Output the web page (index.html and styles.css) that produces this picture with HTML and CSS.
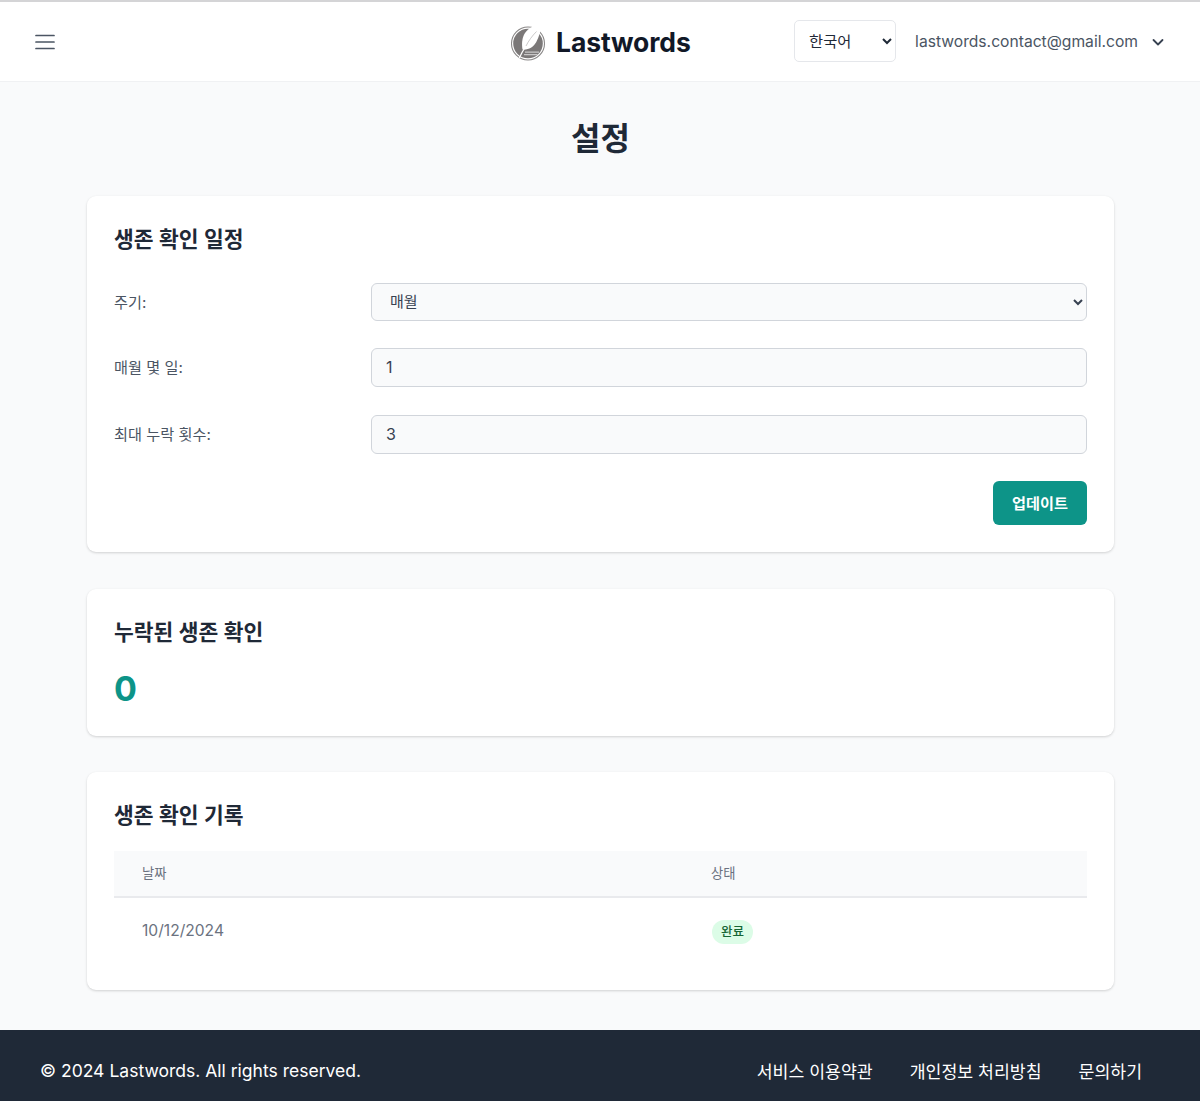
FILE: index.html
```html
<!DOCTYPE html>
<html lang="ko">
<head>
<meta charset="utf-8">
<title>Lastwords</title>
<link rel="stylesheet" href="styles.css">
</head>
<body>
<header class="topbar">
  <button class="menu-btn" aria-label="menu">
    <svg width="24" height="24" viewBox="0 0 24 24" fill="none" stroke="#4b5563" stroke-width="1.7" stroke-linecap="round"><path d="M3 5.500h18M3 12h18M3 18.500h18"/></svg>
  </button>
  <a class="brand">
    <svg class="logo" width="38" height="40" viewBox="0 0 38 40">
      <ellipse cx="18" cy="21.500" rx="16.500" ry="16.500" fill="#fff" stroke="#8a8888" stroke-width="1.100"/>
      <ellipse cx="18" cy="21.500" rx="14.800" ry="14.800" fill="#7b7878"/>
      <path d="M15 29.500h14v1.200H15zM14 32h13.500v1.200H14z" fill="#c9c8c8"/>
      <path d="M31.500 1.500C26 2 19 5.500 15 11c-3 4.500-3.500 11-2.500 16.500 6 .5 10.500-2 13.500-7 3-5.500 5-12 5.500-19z" fill="#fff"/>
      <path d="M9.500 35.500C12 30 14 27 16 24" fill="none" stroke="#fff" stroke-width="1.300" stroke-linecap="round"/>
      <path d="M16 24C18.500 19 22 14 26.500 9.500" fill="none" stroke="#b5b3b3" stroke-width=".7"/>
    </svg>
    <span class="brand-name">Lastwords</span>
  </a>
  <div class="top-right">
    <select class="lang"><option>한국어</option></select>
    <div class="account">
      <span>lastwords.contact@gmail.com</span>
      <svg width="20" height="20" viewBox="0 0 20 20" fill="none" stroke="#374151" stroke-width="1.800" stroke-linecap="round" stroke-linejoin="round"><path d="M5.500 8l4.500 4.500L14.500 8"/></svg>
    </div>
  </div>
</header>

<main class="page">
  <h1 class="page-title">설정</h1>

  <section class="card card-schedule">
    <h2 class="card-title">생존 확인 일정</h2>
    <div class="form-row row-select">
      <label class="form-label">주기:</label>
      <select class="form-field"><option>매월</option></select>
    </div>
    <div class="form-row">
      <label class="form-label">매월 몇 일:</label>
      <input class="form-field" type="text" value="1">
    </div>
    <div class="form-row">
      <label class="form-label">최대 누락 횟수:</label>
      <input class="form-field" type="text" value="3">
    </div>
    <div class="form-actions"><button class="primary-btn">업데이트</button></div>
  </section>

  <section class="card card-missed">
    <h2 class="card-title">누락된 생존 확인</h2>
    <p class="count">0</p>
  </section>

  <section class="card card-history">
    <h2 class="card-title">생존 확인 기록</h2>
    <table class="history">
      <thead><tr><th class="col-date">날짜</th><th>상태</th></tr></thead>
      <tbody><tr><td class="col-date">10/12/2024</td><td><span class="badge">완료</span></td></tr></tbody>
    </table>
  </section>
</main>

<footer class="footer">
  <span class="copyright">© 2024 Lastwords. All rights reserved.</span>
  <nav class="footer-links">
    <a>서비스 이용약관</a>
    <a>개인정보 처리방침</a>
    <a>문의하기</a>
  </nav>
</footer>
</body>
</html>
```

FILE: styles.css
```css
* { box-sizing: border-box; }
html, body { margin: 0; padding: 0; }
body {
  background: #f9fafb;
  color: #111827;
  font-family: Inter, "Noto Sans CJK KR", sans-serif;
  border-top: 2px solid #d4d4d6;
  height: 1101px;
  display: flex;
  flex-direction: column;
  overflow: hidden;
}
.topbar {
  position: relative;
  height: 80px;
  flex: none;
  background: #fff;
  border-bottom: 1px solid #f0f1f3;
  display: flex;
  align-items: center;
  justify-content: space-between;
  padding: 0 32px 0 33px;
}
.menu-btn { background: none; border: 0; padding: 0; display: flex; }
.brand {
  position: absolute;
  left: 510px;
  top: 20px;
  display: flex;
  align-items: center;
  gap: 8px;
}
.brand-name { font-size: 26.500px; font-weight: 700; color: #111827; letter-spacing: -0.1px; line-height: 40px; }
.top-right { display: flex; align-items: center; gap: 19px; }
.lang {
  width: 102px;
  height: 42px;
  margin-top: -1px;
  background: #fff;
  border: 1px solid #e5e7eb;
  border-radius: 5px;
  padding: 0 8px 0 10px;
  font: 15.300px Inter, "Noto Sans CJK KR", sans-serif;
  color: #1f2937;
}
.account { display: flex; align-items: center; gap: 10px; font-size: 15.650px; color: #4b5563; }
.page { flex: 1; padding: 0 86px 0 87px; display: flex; flex-direction: column; }
.page-title {
  margin: 34px 0 0;
  height: 80px;
  font-size: 32px;
  font-weight: 700;
  line-height: 46px;
  text-align: center;
  color: #1f2937;
}
.card {
  background: #fff;
  border-radius: 9px;
  box-shadow: 0 1px 3px rgba(0,0,0,.12), 0 1px 2px rgba(0,0,0,.05);
  padding: 28px 27px;
}
.card-schedule { height: 356px; margin-bottom: 37px; }
.card-missed { height: 147px; margin-bottom: 36px; }
.card-history { height: 218px; }
.card-title {
  margin: 0;
  font-size: 21.500px;
  font-weight: 600;
  line-height: 30px;
  color: #1f2937;
}
.card-schedule .card-title { margin-bottom: 29px; }
.form-row { display: flex; align-items: center; height: 39px; margin-bottom: 28px; }
.row-select { height: 38px; margin-bottom: 27px; }
.form-label { width: 257px; flex: none; font-size: 15.200px; color: #4b5563; padding-bottom: 4px; }
.row-select .form-label { padding-bottom: 2px; }
.form-field {
  flex: 1;
  min-width: 0;
  height: 100%;
  background: #f9fafb;
  border: 1px solid #d1d5db;
  border-radius: 6px;
  padding: 0 14px 2px;
  font: 16px Inter, "Noto Sans CJK KR", sans-serif;
  color: #374151;
}
select.form-field { font-size: 15px; padding-left: 14px; }
.form-row:last-of-type { margin-bottom: 27px; }
.form-actions { display: flex; justify-content: flex-end; margin-top: -1px; }
.primary-btn {
  width: 94px;
  height: 44px;
  background: #0d9488;
  color: #fff;
  border: 0;
  border-radius: 6px;
  padding: 0 0 3px;
  font: 600 15.200px Inter, "Noto Sans CJK KR", sans-serif;
}
.count { margin: 22px 0 0; font-size: 34px; font-weight: 700; line-height: 40px; color: #0d9488; }
.card-history .card-title { margin-bottom: 21px; }
.history { width: 100%; border-collapse: collapse; }
.history th {
  height: 46px;
  background: #f9fafb;
  border-bottom: 2px solid #e9eaed;
  text-align: left;
  padding: 0 0 2px;
  font-size: 13.300px;
  font-weight: 400;
  color: #6b7280;
}
.history td { height: 66px; padding: 0; font-size: 15.600px; color: #6b7280; }
.history .col-date { width: 597px; padding-left: 28px; }
.badge {
  display: inline-block;
  margin-left: 1px;
  position: relative;
  top: 1px;
  background: #dcfce7;
  color: #166534;
  border-radius: 12px;
  padding: 0 9px;
  line-height: 24px;
  font-size: 12.500px;
  font-weight: 500;
  vertical-align: middle;
}
.footer {
  flex: none;
  height: 71px;
  background: #1f2937;
  color: #fff;
  display: flex;
  align-items: center;
  justify-content: space-between;
  padding: 10px 58px 0 40px;
}
.copyright { font-size: 17.550px; }
.footer-links { display: flex; gap: 37px; font-size: 17.250px; }
```
